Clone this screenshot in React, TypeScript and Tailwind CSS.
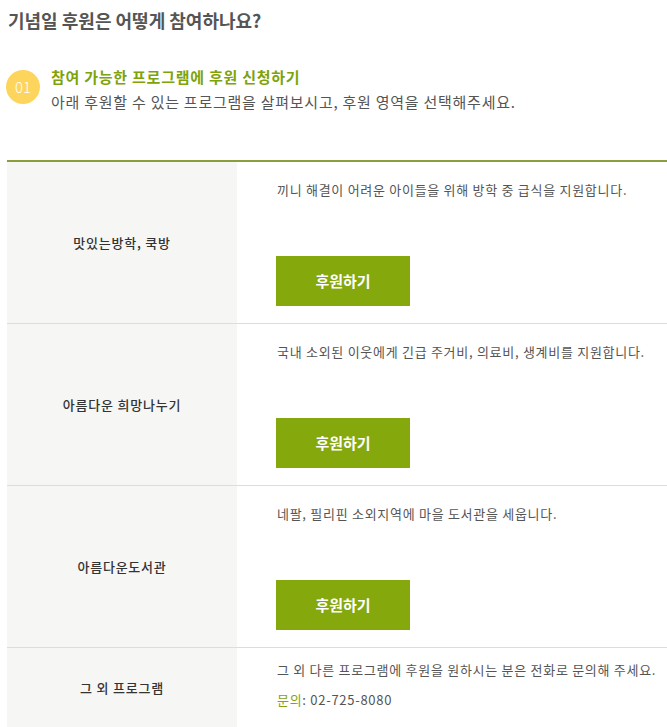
import React from 'react';

const font = { fontFamily: '"Noto Sans CJK KR", "Noto Sans", sans-serif' };

type Program = {
    name: string;
    desc: string;
};

const programs: Program[] = [
    { name: '맛있는방학, 쿡방', desc: '끼니 해결이 어려운 아이들을 위해 방학 중 급식을 지원합니다.' },
    { name: '아름다운 희망나누기', desc: '국내 소외된 이웃에게 긴급 주거비, 의료비, 생계비를 지원합니다.' },
    { name: '아름다운도서관', desc: '네팔, 필리핀 소외지역에 마을 도서관을 세웁니다.' },
];

function Row({ p }: { p: Program }) {
    return (
        <div className="flex border-b border-[#dddddd]">
            <div className="w-[230px] shrink-0 bg-[#f6f6f4] flex items-center justify-center text-[13px] tracking-[0.06em] text-[#333] font-medium">
                {p.name}
            </div>
            <div className="flex-1 pl-10 pt-[18px] pb-[17px]">
                <p className="text-[13px] leading-5 tracking-[0.055em] text-[#555]">{p.desc}</p>
                <button className="mt-[56px] ml-[-1px] w-[134px] h-[50px] bg-[#85a80c] text-white text-[15px] font-bold">
                    후원하기
                </button>
            </div>
        </div>
    );
}

export default function App() {
    return (
        <div className="bg-white w-[667px] min-h-[727px] overflow-hidden" style={font}>
            <h1 className="pl-2 pt-[7px] text-[18px] leading-[26px] font-bold text-[#555]">
                기념일 후원은 어떻게 참여하나요?
            </h1>
            <div className="flex mt-[34px] pl-[6px]">
                <div className="w-[34px] h-[34px] mt-[3px] rounded-full bg-[#fdd55c] flex items-center justify-center text-white text-[15px] font-light">
                    01
                </div>
                <div className="ml-[11px]">
                    <h2 className="text-[15px] leading-5 font-bold tracking-[0.05em] text-[#7ea30a]">참여 가능한 프로그램에 후원 신청하기</h2>
                    <p className="mt-[4px] text-[15px] leading-[22px] tracking-[0.05em] text-[#555]">
                        아래 후원할 수 있는 프로그램을 살펴보시고, 후원 영역을 선택해주세요.
                    </p>
                </div>
            </div>
            <div className="ml-[7px] mt-[47px] border-t-2 border-[#8a9e3c]">
                {programs.map((p) => (
                    <Row key={p.name} p={p} />
                ))}
                <div className="flex border-b border-[#dddddd]">
                    <div className="w-[230px] shrink-0 bg-[#f6f6f4] flex items-center justify-center text-[13px] tracking-[0.06em] text-[#333] font-medium">
                        그 외 프로그램
                    </div>
                    <div className="flex-1 pl-10 pt-[12px] pb-[17px] text-[13px] leading-5 tracking-[0.055em] text-[#555]">
                        <p>그 외 다른 프로그램에 후원을 원하시는 분은 전화로 문의해 주세요.</p>
                        <p className="mt-[10px]">
                            <span className="text-[#86a30e]">문의</span>: 02-725-8080
                        </p>
                    </div>
                </div>
            </div>
        </div>
    );
}
